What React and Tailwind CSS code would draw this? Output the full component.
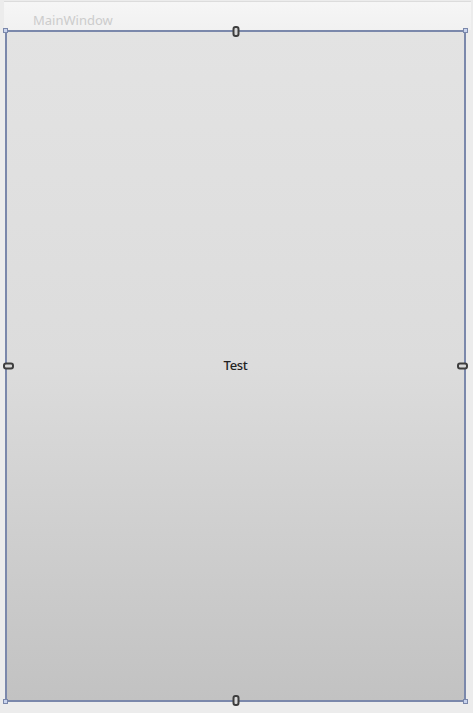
export default function App() {
  const handleV = "absolute w-[7px] h-[11px] rounded-[3px] border-2 border-[#3e3e3e] bg-[#d8d8d8]";
  const handleH = "absolute w-[11px] h-[7px] rounded-[3px] border-2 border-[#3e3e3e] bg-[#d8d8d8]";
  const corner = "absolute w-[5px] h-[5px] bg-[#c9d4ee] border border-[#7b88ab]";
  return (
    <div className="w-[473px] h-[713px] bg-[#ececec] flex flex-col overflow-hidden" style={{ fontFamily: '"Segoe UI", "Noto Sans", "Liberation Sans", sans-serif' }}>
      <div className="h-[29px] shrink-0 ml-[4px] mr-[2px] mt-[1px] bg-gradient-to-b from-[#f6f6f6] to-[#f1f1f1] border-t border-[#dcdcdc] flex items-center pl-[29px]">
        <span className="text-[13px] text-[#cccccc] mt-[10px]">MainWindow</span>
      </div>
      <div className="flex-1 flex pl-[5px] pr-[7px] pb-[11px]">
        <div className="relative flex-1 border-2 border-[#7b88ab] bg-gradient-to-b from-[#e3e3e3] via-[#dcdcdc] to-[#c2c2c2] flex items-center justify-center">
          <span className="text-[13px] font-medium text-[#222] tracking-tight">Test</span>
          <div className={handleV + " left-1/2 -translate-x-1/2 -top-[6px]"} />
          <div className={handleV + " left-1/2 -translate-x-1/2 -bottom-[6px]"} />
          <div className={handleH + " top-1/2 -translate-y-1/2 -left-[4px]"} />
          <div className={handleH + " top-1/2 -translate-y-1/2 -right-[4px]"} />
          <div className={corner + " -left-[4px] -top-[4px]"} />
          <div className={corner + " -right-[4px] -top-[4px]"} />
          <div className={corner + " -left-[4px] -bottom-[4px]"} />
          <div className={corner + " -right-[4px] -bottom-[4px]"} />
        </div>
      </div>
    </div>
  );
}
